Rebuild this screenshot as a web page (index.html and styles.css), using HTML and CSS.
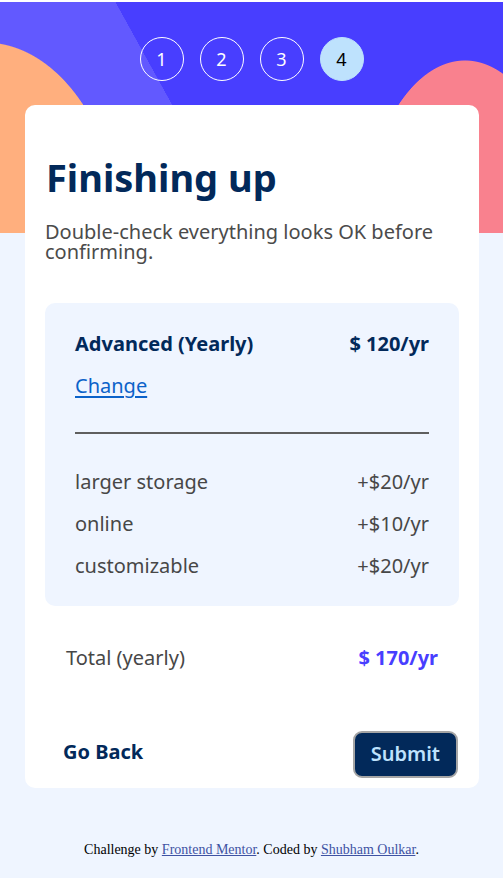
FILE: index.html
```html
<!DOCTYPE html>
<html lang="en">
<head>
<meta charset="utf-8">
<title>Multi-step form – Finishing up</title>
<link rel="stylesheet" href="styles.css">
</head>
<body>
<header class="hero">
  <ol class="steps">
    <li class="step">1</li>
    <li class="step">2</li>
    <li class="step">3</li>
    <li class="step step--active">4</li>
  </ol>
</header>
<main class="card">
  <h1 class="title">Finishing up</h1>
  <p class="desc">Double-check everything looks OK before confirming.</p>
  <section class="summary">
    <div class="plan-row">
      <span class="plan-name">Advanced (Yearly)</span>
      <span class="plan-price">$ 120/yr</span>
    </div>
    <a class="change" href="#">Change</a>
    <hr class="divider">
    <ul class="addons">
      <li class="addon"><span>larger storage</span><span>+$20/yr</span></li>
      <li class="addon"><span>online</span><span>+$10/yr</span></li>
      <li class="addon"><span>customizable</span><span>+$20/yr</span></li>
    </ul>
  </section>
  <div class="total">
    <span class="total-label">Total (yearly)</span>
    <span class="total-price">$ 170/yr</span>
  </div>
  <div class="actions">
    <a class="back" href="#">Go Back</a>
    <button class="submit" type="button">Submit</button>
  </div>
</main>
<footer class="attribution">
  Challenge by <a href="#">Frontend Mentor</a>. Coded by <a href="#">Shubham Oulkar</a>.
</footer>
</body>
</html>
```
FILE: styles.css
```css
html {
  background: #eff5ff;
}
body {
  margin: 0;
  font-family: "Noto Sans", "Open Sans", sans-serif;
  background: #eff5ff;
}
.hero {
  border-top: 2px solid #fff;
  height: 231px;
  box-sizing: content-box;
  padding: 0;
  background:
    radial-gradient(ellipse 140px 216px at -15px 256px, #ffaf7e 99.5%, rgba(255,175,126,0) 100%),
    radial-gradient(ellipse 106px 200px at 465px 258px, #f9818e 99.5%, rgba(249,129,142,0) 100%),
    linear-gradient(61.1deg, #6259ff 38.5%, #483eff 38.55%);
}
.steps {
  list-style: none;
  margin: 0;
  padding: 35px 0 0;
  display: flex;
  justify-content: center;
  gap: 16px;
}
.step {
  width: 44px;
  height: 44px;
  box-sizing: border-box;
  border: 1px solid #fff;
  border-radius: 50%;
  color: #fff;
  font-size: 18px;
  display: flex;
  align-items: center;
  justify-content: center;
}
.step--active {
  background: #bee2fd;
  border-color: #bee2fd;
  color: #000;
}
.card {
  display: block;
  width: 454px;
  box-sizing: border-box;
  margin: -128px 0 0 25px;
  padding: 48px 20px 10px;
  background: #fff;
  border-radius: 10px;
}
.title {
  margin: 0;
  font-size: 38px;
  line-height: 48px;
  font-weight: 700;
  color: #02295a;
  padding-left: 1px;
}
.desc {
  margin: 21px 0 0;
  font-size: 20px;
  line-height: 20px;
  color: #4b4b4b;
}
.summary {
  margin-top: 41px;
  background: #eff5ff;
  border-radius: 10px;
  padding: 27px 30px 19px;
  display: flex;
  flex-direction: column;
  align-items: stretch;
}
.plan-row {
  display: flex;
  justify-content: space-between;
  font-size: 20px;
  line-height: 28px;
  font-weight: 700;
  color: #02295a;
}
.change {
  margin-top: 14px;
  align-self: flex-start;
  font-size: 20px;
  line-height: 28px;
  color: #0b62c9;
  text-decoration: underline;
  text-underline-offset: 3px;
}
.divider {
  margin: 32px 0 0;
  border: 0;
  height: 2px;
  background: #5f5f5f;
}
.addons {
  list-style: none;
  margin: 27px 0 0;
  padding: 0;
}
.addon {
  display: flex;
  justify-content: space-between;
  font-size: 20px;
  line-height: 42px;
  color: #474747;
}
.total {
  margin-top: 38px;
  padding: 0 21px;
  display: flex;
  justify-content: space-between;
  font-size: 20px;
  line-height: 28px;
}
.total-label {
  color: #474747;
}
.total-price {
  color: #483eff;
  font-weight: 700;
}
.actions {
  margin-top: 59px;
  display: flex;
  justify-content: space-between;
  align-items: flex-start;
}
.back {
  margin: 7px 0 0 18px;
  font-size: 20px;
  line-height: 28px;
  font-weight: 700;
  color: #02295a;
  text-decoration: none;
}
.submit {
  margin-right: 1px;
  height: 47px;
  box-sizing: border-box;
  padding: 7px 16px 8px;
  border: 2px solid #a5a5a5;
  border-radius: 9px;
  background: #02295a;
  color: #bee2fd;
  font-family: inherit;
  font-size: 20px;
  line-height: 28px;
  font-weight: 600;
}
.attribution {
  margin-top: 54px;
  text-align: center;
  font-family: "Liberation Serif", "Times New Roman", serif;
  font-size: 14px;
  line-height: 16px;
  color: #000;
}
.attribution a {
  color: #3e52a3;
}
```
